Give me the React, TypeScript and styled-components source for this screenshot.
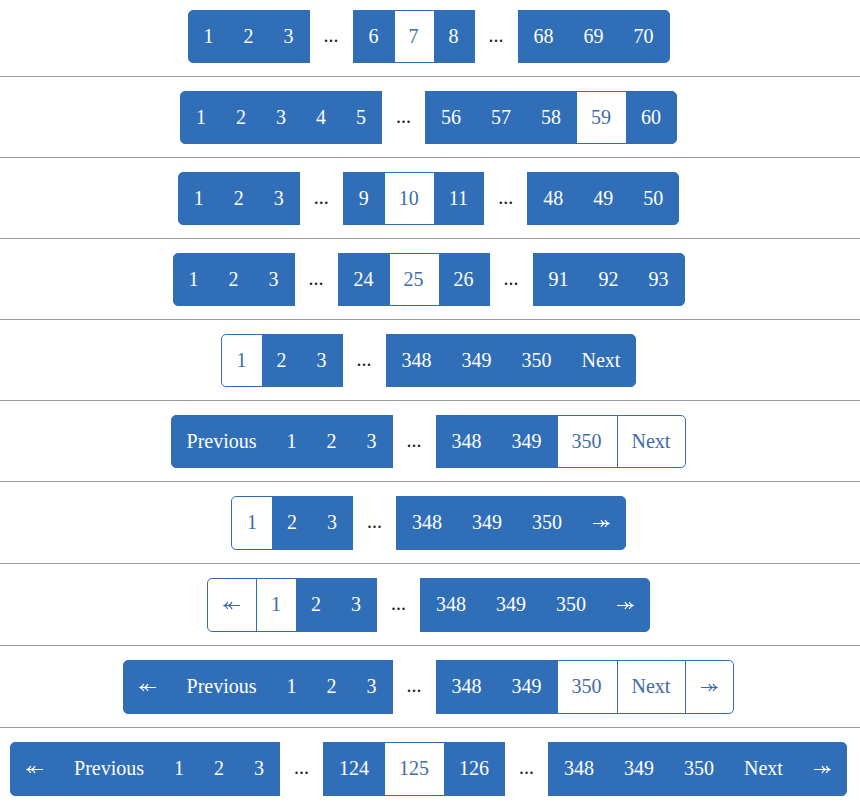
import React from "react";
import styled, { createGlobalStyle, css } from "styled-components";

const GlobalStyle = createGlobalStyle`
  body {
    margin: 0;
    background: #fff;
    color: #222;
    font-family: "Liberation Serif", "Times New Roman", serif;
    font-size: 20px;
  }
`;

const Page = styled.main`
  padding-top: 10px;
`;

const Pager = styled.nav`
  display: flex;
  justify-content: center;
  padding-right: 3px;
`;

const Divider = styled.hr`
  height: 1px;
  margin: 13px 0 14px;
  border: 0;
  background: #999;
`;

const Group = styled.div`
  display: flex;
`;

const PageButton = styled.button<{ $plain: boolean; $tall: boolean }>`
  display: flex;
  align-items: center;
  margin: 0 0 0 -1px;
  padding: 13px 15px ${(p) => (p.$tall ? 14 : 13)}px 14px;
  border: 1px solid #306eb7;
  border-radius: 0;
  background: #306eb7;
  color: #fff;
  font: inherit;
  line-height: 25px;
  cursor: pointer;

  ${Group} > &:first-child {
    margin-left: 0;
    padding-left: 15px;
  }

  ${Pager} > ${Group}:first-child > &:first-child {
    border-radius: 5px 0 0 5px;
  }

  ${Pager} > ${Group}:last-child > &:last-child {
    border-radius: 0 5px 5px 0;
  }

  ${(p) =>
    p.$plain &&
    css`
      background: #fff;
      color: #416ba9;
      cursor: default;
    `}
`;

const Gap = styled.span`
  padding: 0 14px;
  line-height: 50px;
`;

const ArrowIcon = styled.svg<{ $flip: boolean }>`
  display: block;
  width: 18px;
  height: 25px;
  fill: none;
  stroke: currentColor;
  stroke-width: 1.2;
  ${(p) => p.$flip && "transform: scaleX(-1);"}
`;

function Arrow({ back }: { back: boolean }) {
  return (
    <ArrowIcon $flip={back} viewBox="0 0 18 25" aria-hidden="true">
      <path d="M1 13.5H17M9 10Q10 12.7 12.8 13.5Q10 14.3 9 17M13.2 10Q14.2 12.7 17 13.5Q14.2 14.3 13.2 17" />
    </ArrowIcon>
  );
}

interface PagerData {
  groups: string[][];
  plain: string[];
}

const pagers: PagerData[] = [
  { groups: [["1", "2", "3"], ["6", "7", "8"], ["68", "69", "70"]], plain: ["7"] },
  { groups: [["1", "2", "3", "4", "5"], ["56", "57", "58", "59", "60"]], plain: ["59"] },
  { groups: [["1", "2", "3"], ["9", "10", "11"], ["48", "49", "50"]], plain: ["10"] },
  { groups: [["1", "2", "3"], ["24", "25", "26"], ["91", "92", "93"]], plain: ["25"] },
  { groups: [["1", "2", "3"], ["348", "349", "350", "Next"]], plain: ["1"] },
  { groups: [["Previous", "1", "2", "3"], ["348", "349", "350", "Next"]], plain: ["350", "Next"] },
  { groups: [["1", "2", "3"], ["348", "349", "350", "last"]], plain: ["1"] },
  { groups: [["first", "1", "2", "3"], ["348", "349", "350", "last"]], plain: ["first", "1"] },
  {
    groups: [["first", "Previous", "1", "2", "3"], ["348", "349", "350", "Next", "last"]],
    plain: ["350", "Next", "last"],
  },
  {
    groups: [
      ["first", "Previous", "1", "2", "3"],
      ["124", "125", "126"],
      ["348", "349", "350", "Next", "last"],
    ],
    plain: ["125"],
  },
];

const arrowLabels: Record<string, string> = { first: "First page", last: "Last page" };

function Pagination({ groups, plain }: PagerData) {
  const tall = groups.flat().some((item) => item in arrowLabels);
  return (
    <Pager aria-label="Pagination">
      {groups.map((group, index) => (
        <React.Fragment key={index}>
          {index > 0 && <Gap>...</Gap>}
          <Group>
            {group.map((item) => {
              const isPlain = plain.includes(item);
              return (
                <PageButton
                  key={item}
                  type="button"
                  $plain={isPlain}
                  $tall={tall}
                  aria-label={arrowLabels[item]}
                  aria-current={isPlain && /^\d+$/.test(item) ? "page" : undefined}
                >
                  {item in arrowLabels ? <Arrow back={item === "first"} /> : item}
                </PageButton>
              );
            })}
          </Group>
        </React.Fragment>
      ))}
    </Pager>
  );
}

export default function App() {
  return (
    <>
      <GlobalStyle />
      <Page>
        {pagers.map((pager, index) => (
          <React.Fragment key={index}>
            {index > 0 && <Divider />}
            <Pagination {...pager} />
          </React.Fragment>
        ))}
      </Page>
    </>
  );
}
